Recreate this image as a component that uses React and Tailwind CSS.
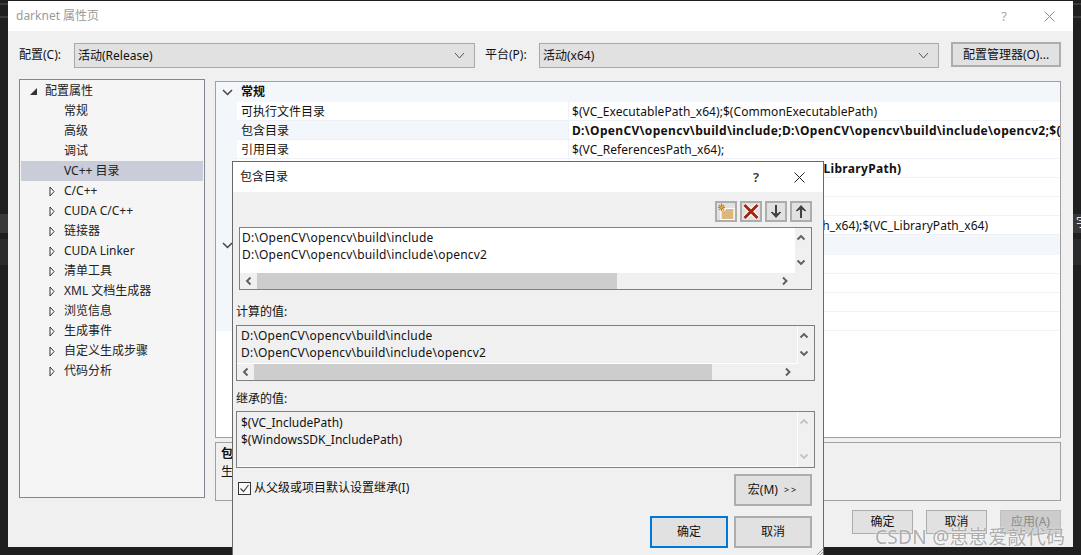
import React from 'react';

const treeItems = ['C/C++', 'CUDA C/C++', '链接器', 'CUDA Linker', '清单工具', 'XML 文档生成器', '浏览信息', '生成事件', '自定义生成步骤', '代码分析'];

const generalRows = [
  { name: '可执行文件目录', value: '$(VC_ExecutablePath_x64);$(CommonExecutablePath)' },
  { name: '包含目录', value: 'D:\\OpenCV\\opencv\\build\\include;D:\\OpenCV\\opencv\\build\\include\\opencv2;$(VC_IncludePath);$(WindowsSDK_IncludePath);', bold: true, active: true },
  { name: '引用目录', value: '$(VC_ReferencesPath_x64);' },
  { name: '库目录', value: 'D:\\OpenCV\\opencv\\build\\x64\\vc15\\lib;$(LibraryPath)', bold: true },
  { name: 'Windows 运行库目录', value: '$(WindowsSDK_MetadataPath);' },
  { name: '源目录', value: '$(VC_SourcePath);' },
  { name: '排除目录', value: '$(CommonExcludePath);$(VC_ExecutablePath_x64);$(VC_LibraryPath_x64)' },
];

const Chevron = ({ dir = 'down', className = '' }) => {
  const d = {
    down: 'M1.5 2.5 L5 6 L8.5 2.5',
    up: 'M1.5 6.5 L5 3 L8.5 6.5',
    left: 'M6.5 1.5 L3 5 L6.5 8.5',
    right: 'M3 1.5 L6.5 5 L3 8.5',
  }[dir];
  return (
    <svg className={className} width="10" height="10" viewBox="0 0 10 10" fill="none" stroke="currentColor" strokeWidth="1.9">
      <path d={d} />
    </svg>
  );
};

const Select = ({ value, className }) => (
  <div className={`flex items-center justify-between h-[25px] bg-[#e1e1e1] border border-[#a9a9a9] pl-[3px] pr-[9px] text-[#111] ${className}`}>
    <span>{value}</span>
    <svg width="11" height="7" viewBox="0 0 11 7" fill="none" stroke="#555" strokeWidth="1">
      <path d="M1 1 L5.5 6 L10 1" />
    </svg>
  </div>
);

const Button = ({ children, className = '', primary, disabled }) => (
  <div
    className={`flex items-center justify-center ${
      primary
        ? 'bg-[#e1e1e1] border-2 border-[#0078d7] text-[#111]'
        : disabled
        ? 'bg-[#cccccc] border border-[#bfbfbf] text-[#8a8a8a]'
        : 'bg-[#e1e1e1] border-2 border-[#adadad] text-[#111]'
    } ${className}`}
  >
    {children}
  </div>
);

const SectionHead = ({ label }) => (
  <div className="flex items-center h-[20px] bg-[#f3f6fb]">
    <div className="w-[21px] flex justify-center pl-[1px]">
      <svg width="11" height="7" viewBox="0 0 11 7" fill="none" stroke="#444" strokeWidth="1.5">
        <path d="M1 1 L5.5 5.5 L10 1" />
      </svg>
    </div>
    <span className="font-bold text-[#111] pl-[4px] leading-[22px]">{label}</span>
  </div>
);

const GridRow = ({ name, value, bold, active }) => (
  <div className="flex h-[19px] bg-[#f3f6fb]">
    <div className="w-[21px] shrink-0" />
    <div className={`w-[331px] shrink-0 pl-[4px] leading-[20px] border-b border-[#eef1f7] text-[#111] ${active ? 'bg-[#f3f6fb]' : 'bg-white'}`}>{name}</div>
    <div className={`flex-1 overflow-hidden whitespace-nowrap pl-[3px] leading-[20px] bg-white border-b border-l border-[#eef1f7] text-[#111] ${bold ? 'font-bold tracking-[0.32px]' : 'tracking-[0.06px]'}`}>{value}</div>
  </div>
);

// list box with the two scroll bars used in the include dialog
const ScrollBox = ({ lines, textClass, thumbClass, hasHBar = true, dim, className }) => (
  <div className={`flex flex-col border border-[#7f7f7f] ${className}`}>
    <div className="flex flex-1 min-h-0">
      <div className={`flex-1 leading-[17px] tracking-[0.2px] text-[#111] border-r border-b border-white ${textClass}`}>
        {lines.map((line) => (
          <div key={line}>{line}</div>
        ))}
      </div>
      <div className={`w-[16px] pr-[4px] flex flex-col items-center justify-between py-[5px] ${dim ? 'text-[#c4c4c4]' : 'text-[#5f5f5f]'}`}>
        <Chevron dir="up" />
        <Chevron dir="down" />
      </div>
    </div>
    {hasHBar && (
      <div className="flex items-center h-[16px] text-[#5f5f5f]">
        <div className="w-[17px] flex justify-center">
          <Chevron dir="left" />
        </div>
        <div className={`h-full bg-[#cdcdcd] ${thumbClass}`} />
        <div className="flex-1 flex justify-end pr-[21px]">
          <Chevron dir="right" />
        </div>
      </div>
    )}
  </div>
);

const ToolButton = ({ children }) => (
  <div className="w-[22px] h-[21px] bg-[#e1e1e1] border-2 border-[#adadad] flex items-center justify-center">{children}</div>
);

const FolderIcon = () => (
  <svg width="18" height="17" viewBox="0 0 18 17">
    <path d="M4 7 H8 L9 5.5 H17 V16.5 H4 Z" fill="#dcb67a" stroke="#fff" strokeWidth="1.2" />
    <path d="M4.5 0.5 V8 M1 4.3 H8 M2 1.8 L7 6.8 M7 1.8 L2 6.8" stroke="#c27d1a" strokeWidth="1.2" />
    <circle cx="4.5" cy="4.3" r="1.4" fill="#e8a33a" />
  </svg>
);

const DeleteIcon = () => (
  <svg width="18" height="17" viewBox="0 0 18 17">
    <path d="M2.5 2 L15.5 15 M15.5 2 L2.5 15" stroke="#fff" strokeWidth="5" />
    <path d="M2.5 2 L15.5 15 M15.5 2 L2.5 15" stroke="#a1260d" strokeWidth="3" />
  </svg>
);

const ArrowIcon = ({ up }) => (
  <svg width="14" height="17" viewBox="0 0 14 17" className={up ? 'rotate-180' : ''}>
    <path d="M7 15.5 L1.5 9.5 L3 8 L5.5 10 V1.5 H8.5 V10 L11 8 L12.5 9.5 Z" fill="#424242" stroke="#fff" strokeWidth="0.7" />
  </svg>
);

const TreeRow = ({ label, selected, indent }) => (
  <div className={`flex items-center h-[20px] text-[#222] ${selected ? 'bg-[#c9ccd9]' : ''}`}>
    <div className="w-[34px] shrink-0 flex justify-end">
      {indent && (
        <svg width="6" height="11" viewBox="0 0 6 11" fill="#fff" stroke="#333" strokeWidth="1">
          <path d="M1 1 L5 5.5 L1 10 Z" />
        </svg>
      )}
    </div>
    <span className="pl-[9px]">{label}</span>
  </div>
);

const App = () => {
  return (
    <div className="relative w-[1081px] h-[555px] overflow-hidden bg-[#1f1f1f] text-[12px] leading-[18px] font-['Noto_Sans','Noto_Sans_CJK_SC',sans-serif]">
      {/* editor behind the window */}
      <div className="absolute left-0 top-[3px] w-full h-[2px] bg-[#3a3a3a]" />
      <div className="absolute left-0 top-[16px] w-full h-[2px] bg-[#3a3a3a]" />
      <div className="absolute left-0 top-[214px] w-full h-[19px] bg-[#38383b]" />
      <div className="absolute left-0 top-[239px] w-full h-[26px] bg-[#2b2b2d]" />
      <div className="absolute left-[1076px] top-[214px] text-white">字</div>

      {/* property pages window */}
      <div className="absolute left-[8px] top-[1px] w-[1065px] h-[546px] flex flex-col bg-[#f0f0f0]">
        <div className="relative flex items-center justify-between h-[30px] shrink-0 bg-white pl-[8px] pr-[18px] text-[#9b9b9b]">
          <span>darknet 属性页</span>
          <div className="flex items-center gap-[37px]">
            <span className="text-[#a8a8a8] text-[13px]">?</span>
            <svg width="11" height="11" viewBox="0 0 11 11" stroke="#8a8a8a" strokeWidth="1">
              <path d="M0.5 0.5 L10.5 10.5 M10.5 0.5 L0.5 10.5" />
            </svg>
          </div>
        </div>

        <div className="flex items-start h-[25px] mt-[12px] pl-[11px]">
          <span className="w-[55px] shrink-0 leading-[24px] text-[#111]">配置(C):</span>
          <Select value="活动(Release)" className="w-[401px] shrink-0" />
          <span className="w-[64px] shrink-0 pl-[10px] leading-[24px] text-[#111]">平台(P):</span>
          <Select value="活动(x64)" className="w-[400px] shrink-0" />
          <div className="ml-[12px] w-[110px] h-[25px] -mt-[1px] bg-[#e1e1e1] border-2 border-[#adadad] flex items-center justify-center text-[#111]">配置管理器(O)...</div>
        </div>

        <div className="flex items-start mt-[11px] pl-[11px]">
          <div className="w-[186px] h-[419px] shrink-0 bg-[#f5f5f5] border border-[#82868f] p-[1px]">
            <div className="flex items-center h-[20px] text-[#222]">
              <svg className="ml-[9px]" width="7" height="7" viewBox="0 0 7 7" fill="#333">
                <path d="M7 0 V7 H0 Z" />
              </svg>
              <span className="pl-[8px]">配置属性</span>
            </div>
            {['常规', '高级', '调试'].map((label) => (
              <TreeRow key={label} label={label} />
            ))}
            <TreeRow label="VC++ 目录" selected />
            {treeItems.map((label) => (
              <TreeRow key={label} label={label} indent />
            ))}
          </div>

          <div className="w-[846px] ml-[10px] mt-[2px] shrink-0">
            <div className="h-[357px] bg-white border border-[#a0a0a0] overflow-hidden">
              <SectionHead label="常规" />
              {generalRows.map((row) => (
                <GridRow key={row.name} {...row} />
              ))}
              <SectionHead label="公共" />
              <GridRow name="内容目录" value="" />
              <GridRow name="生成目录" value="" />
              <GridRow name="输出目录" value="" />
              <GridRow name="中间目录" value="" />
            </div>
            <div className="h-[59px] mt-[4px] bg-[#f0f0f0] border border-[#a0a0a0] pl-[5px] pt-[2px] text-[#111]">
              <div className="font-bold">包含目录</div>
              <div>生成 VC++ 项目期间，搜索包含文件时使用的路径。</div>
            </div>
            <div className="flex justify-end gap-[13px] mt-[9px]">
              <Button className="w-[61px] h-[24px] !border">确定</Button>
              <Button className="w-[61px] h-[24px] !border">取消</Button>
              <Button className="w-[61px] h-[24px]" disabled>应用(A)</Button>
            </div>
          </div>
        </div>
      </div>

      {/* include directories dialog */}
      <div className="absolute left-[232px] top-[161px] w-[592px] h-[394px] flex flex-col bg-[#f0f0f0] border-t border-x border-[#696969]">
        <div className="flex items-center justify-between h-[30px] shrink-0 bg-white pl-[7px] pr-[18px] text-[#111]">
          <span>包含目录</span>
          <div className="flex items-center gap-[35px]">
            <span className="text-[13px] font-semibold text-[#333]">?</span>
            <svg width="11" height="11" viewBox="0 0 11 11" stroke="#222" strokeWidth="1">
              <path d="M0.5 0.5 L10.5 10.5 M10.5 0.5 L0.5 10.5" />
            </svg>
          </div>
        </div>

        <div className="flex justify-end gap-[3px] pt-[9px] pr-[11px]">
          <ToolButton><FolderIcon /></ToolButton>
          <ToolButton><DeleteIcon /></ToolButton>
          <ToolButton><ArrowIcon /></ToolButton>
          <ToolButton><ArrowIcon up /></ToolButton>
        </div>

        <ScrollBox
          lines={['D:\\OpenCV\\opencv\\build\\include', 'D:\\OpenCV\\opencv\\build\\include\\opencv2']}
          textClass="bg-white pl-[2px] pt-[1px]"
          thumbClass="w-[360px]"
          className="ml-[6px] mt-[5px] w-[573px] h-[63px]"
        />

        <div className="ml-[3px] mt-[12px] h-[20px] leading-[20px] text-[#111]">计算的值:</div>
        <ScrollBox
          lines={['D:\\OpenCV\\opencv\\build\\include', 'D:\\OpenCV\\opencv\\build\\include\\opencv2']}
          textClass="bg-[#f0f0f0] pl-[4px] pt-[1px]"
          thumbClass="w-[458px]"
          className="ml-[3px] mt-[3px] w-[579px] h-[56px]"
        />

        <div className="ml-[3px] mt-[8px] h-[20px] leading-[20px] text-[#111]">继承的值:</div>
        <ScrollBox
          lines={['$(VC_IncludePath)', '$(WindowsSDK_IncludePath)']}
          textClass="bg-[#f0f0f0] pl-[4px] pt-[2px] !tracking-normal"
          hasHBar={false}
          dim
          className="ml-[3px] mt-[2px] w-[579px] h-[57px]"
        />

        <div className="flex items-start justify-between mt-[6px] pl-[5px] pr-[11px]">
          <div className="flex items-center gap-[3px] mt-[5px] text-[#111]">
            <div className="w-[13px] h-[13px] bg-[#f8f8f8] border border-[#333] flex items-center justify-center">
              <svg width="11" height="11" viewBox="0 0 11 11" fill="none" stroke="#444" strokeWidth="1.2">
                <path d="M1.5 5.5 L4.5 8.5 L9.5 2" />
              </svg>
            </div>
            <span>从父级或项目默认设置继承(I)</span>
          </div>
          <Button className="w-[78px] h-[32px]">
            宏(M)<span className="ml-[6px] text-[9px] tracking-[2px]">&gt;&gt;</span>
          </Button>
        </div>

        <div className="flex justify-end gap-[6px] mt-[10px] pr-[11px]">
          <Button primary className="w-[78px] h-[32px]">确定</Button>
          <Button className="w-[78px] h-[32px]">取消</Button>
        </div>

        <svg className="absolute right-0 bottom-0" width="6" height="6" viewBox="0 0 6 6" stroke="#9a9a9a" strokeWidth="1">
          <path d="M0 6 L6 0 M3 6 L6 3" />
        </svg>
      </div>

      <div className="absolute left-[875px] top-[523px] text-[19px] tracking-[0.3px] leading-[28px] whitespace-nowrap text-[#a3a3a3]/90 [text-shadow:0_0_2px_#fff]">
        CSDN @崽崽爱敲代码
      </div>
    </div>
  );
};

export default App;
